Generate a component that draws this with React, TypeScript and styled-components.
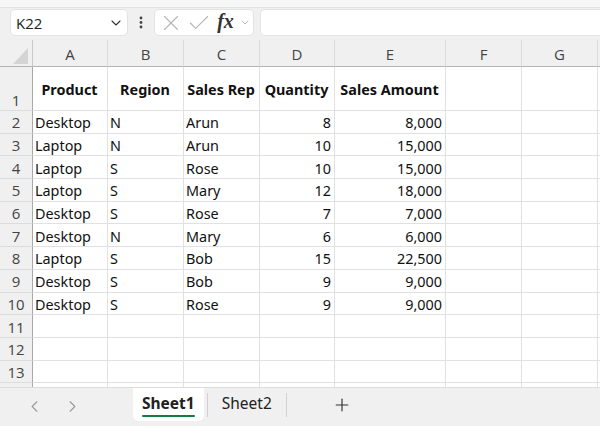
import React from "react";
import styled, { createGlobalStyle } from "styled-components";
import { ChevronDown, ChevronLeft, ChevronRight, Plus, X, Check } from "lucide-react";

const GlobalStyle = createGlobalStyle`
  html, body { margin: 0; padding: 0; background: #f0f0f0; }
  body { font-family: "Open Sans", "Noto Sans", sans-serif; }
  * { box-sizing: border-box; }
`;

const Frame = styled.div`
  width: 600px;
  height: 426px;
  display: flex;
  flex-direction: column;
  background: #f0f0f0;
  overflow: hidden;
`;

const TopStrip = styled.div`
  height: 8px;
  background: #f7f7f7;
  border-bottom: 1px solid #e2e2e2;
  box-shadow: 0 1px 2px rgba(0, 0, 0, 0.06);
`;

const FormulaBar = styled.div`
  height: 32px;
  display: flex;
  align-items: flex-start;
  padding: 1px 0 0 10px;
  background: #f0f0f0;
`;

const Box = styled.div<{ $w?: number }>`
  height: 27px;
  background: #ffffff;
  border: 1px solid #e3e3e3;
  border-radius: 5px;
  display: flex;
  align-items: center;
  ${(p) => (p.$w ? `width: ${p.$w}px;` : "flex: 1; border-right: none; border-radius: 5px 0 0 5px;")}
`;

const NameText = styled.span`
  flex: 1;
  padding-left: 5px;
  font-size: 15px;
  color: #222;
`;

const Dots = styled.div`
  width: 26px;
  display: flex;
  justify-content: center;
  padding-top: 7px;
`;

const IconSlot = styled.span<{ $w: number }>`
  width: ${(p) => p.$w}px;
  display: flex;
  justify-content: center;
  align-items: center;
`;

const Fx = styled.span`
  font-family: "Liberation Serif", "DejaVu Serif", serif;
  font-style: italic;
  font-weight: 700;
  font-size: 20px;
  color: #333;
  line-height: 1;
  margin-top: -3px;
`;

const Gap = styled.div<{ $w: number }>`
  width: ${(p) => p.$w}px;
`;

const Sheet = styled.div`
  height: 348px;
  overflow: hidden;
  display: grid;
  grid-template-columns: 33px 75px 76px 76px 75px 111px 76px 76px 1fr;
  grid-template-rows: 27px 44px repeat(13, 22.7px);
  background: #ffffff;
  border-bottom: 1px solid #dcdcdc;
`;

const Corner = styled.div`
  background: #f0f0f0;
  border-right: 1px solid #c8c8c8;
  border-bottom: 1px solid #b4b4b4;
  display: flex;
  align-items: flex-end;
  justify-content: flex-end;
  padding: 0 4px 2px 0;
`;

const ColHead = styled.div`
  background: #f0f0f0;
  border-right: 1px solid #dadada;
  border-bottom: 1px solid #b4b4b4;
  display: flex;
  align-items: center;
  justify-content: center;
  padding-top: 2px;
  font-size: 15px;
  color: #444;
`;

const RowHead = styled.div<{ $bottom?: boolean }>`
  background: #f0f0f0;
  border-right: 1px solid #a9a9a9;
  border-bottom: 1px solid #dcdcdc;
  display: flex;
  justify-content: center;
  align-items: ${(p) => (p.$bottom ? "flex-end" : "center")};
  padding-top: 1px;
  font-size: 15px;
  color: #444;
  line-height: 20px;
`;

const Cell = styled.div<{ $align?: "left" | "right" | "center"; $bold?: boolean }>`
  border-right: 1px solid #e1e1e1;
  border-bottom: 1px solid #e1e1e1;
  display: flex;
  align-items: center;
  justify-content: ${(p) =>
    p.$align === "right" ? "flex-end" : p.$align === "center" ? "center" : "flex-start"};
  padding: 2px 3px 0 2px;
  font-family: "Noto Sans", "Open Sans", sans-serif;
  font-size: 14.4px;
  font-weight: ${(p) => (p.$bold ? 700 : 400)};
  color: #111;
  white-space: nowrap;
  overflow: hidden;
`;

const TabBar = styled.div`
  flex: 1;
  display: flex;
  align-items: flex-start;
  background: #f0f0f0;
`;

const Nav = styled.div`
  width: 133px;
  display: flex;
  align-items: center;
  padding: 9px 0 0 25px;
  gap: 19px;
  color: #9a9a9a;
`;

const Tab = styled.div<{ $active?: boolean }>`
  height: ${(p) => (p.$active ? "33px" : "30px")};
  padding: 0 ${(p) => (p.$active ? "9px" : "14px")};
  display: flex;
  flex-direction: column;
  align-items: center;
  justify-content: center;
  background: ${(p) => (p.$active ? "#ffffff" : "transparent")};
  border-radius: 0 0 6px 6px;
  font-family: "Noto Sans", "Open Sans", sans-serif;
  font-size: 15.5px;
  font-weight: ${(p) => (p.$active ? 700 : 400)};
  color: #222;
`;

const Underline = styled.span`
  display: block;
  width: 100%;
  height: 2px;
  background: #107c41;
  border-radius: 1px;
  margin-top: 1px;
`;

const Divider = styled.div`
  width: 1px;
  height: 24px;
  margin: 5px 0 0;
  background: #d0d0d0;
`;

const AddBtn = styled.div`
  margin: 7px 0 0 45px;
  color: #333;
  display: flex;
`;

type Row = [string, string, string, number, string];
const rows: Row[] = [
  ["Desktop", "N", "Arun", 8, "8,000"],
  ["Laptop", "N", "Arun", 10, "15,000"],
  ["Laptop", "S", "Rose", 10, "15,000"],
  ["Laptop", "S", "Mary", 12, "18,000"],
  ["Desktop", "S", "Rose", 7, "7,000"],
  ["Desktop", "N", "Mary", 6, "6,000"],
  ["Laptop", "S", "Bob", 15, "22,500"],
  ["Desktop", "S", "Bob", 9, "9,000"],
  ["Desktop", "S", "Rose", 9, "9,000"],
];

const cols = ["A", "B", "C", "D", "E", "F", "G", ""];
const headers = ["Product", "Region", "Sales Rep", "Quantity", "Sales Amount"];

export default function App() {
  return (
    <Frame>
      <GlobalStyle />
      <TopStrip />
      <FormulaBar>
        <Box $w={118}>
          <NameText>K22</NameText>
          <IconSlot $w={22}>
            <ChevronDown size={16} strokeWidth={1.6} color="#333" />
          </IconSlot>
        </Box>
        <Dots>
          <svg width="4" height="13" viewBox="0 0 4 13">
            <circle cx="2" cy="2" r="1.4" fill="#444" />
            <circle cx="2" cy="6.5" r="1.4" fill="#444" />
            <circle cx="2" cy="11" r="1.4" fill="#444" />
          </svg>
        </Dots>
        <Box $w={100}>
          <IconSlot $w={31}>
            <X size={26} strokeWidth={1.0} color="#b5b5b5" />
          </IconSlot>
          <IconSlot $w={26}>
            <Check size={26} strokeWidth={1.0} color="#b5b5b5" />
          </IconSlot>
          <IconSlot $w={27}>
            <Fx>fx</Fx>
          </IconSlot>
          <IconSlot $w={12}>
            <ChevronDown size={13} strokeWidth={1.4} color="#9a9a9a" />
          </IconSlot>
        </Box>
        <Gap $w={6} />
        <Box />
      </FormulaBar>
      <Sheet>
        <Corner>
          <svg width="15" height="16" viewBox="0 0 15 16">
            <polygon points="15,0 15,16 0,16" fill="#d4d4d4" />
          </svg>
        </Corner>
        {cols.map((c, i) => (
          <ColHead key={"h" + i}>{c}</ColHead>
        ))}
        <RowHead $bottom>1</RowHead>
        {headers.map((h) => (
          <Cell key={h} $bold $align="center">
            {h}
          </Cell>
        ))}
        <Cell />
        <Cell />
        <Cell />
        {Array.from({ length: 13 }).map((_, r) => {
          const d = rows[r];
          return (
            <React.Fragment key={r}>
              <RowHead>{r + 2}</RowHead>
              <Cell>{d ? d[0] : ""}</Cell>
              <Cell>{d ? d[1] : ""}</Cell>
              <Cell>{d ? d[2] : ""}</Cell>
              <Cell $align="right">{d ? d[3] : ""}</Cell>
              <Cell $align="right">{d ? d[4] : ""}</Cell>
              <Cell />
              <Cell />
              <Cell />
            </React.Fragment>
          );
        })}
      </Sheet>
      <TabBar>
        <Nav>
          <ChevronLeft size={19} strokeWidth={1.4} />
          <ChevronRight size={19} strokeWidth={1.4} />
        </Nav>
        <Tab $active>
          <span>Sheet1</span>
          <Underline />
        </Tab>
        <Gap $w={3} />
        <Divider />
        <Tab>Sheet2</Tab>
        <Divider />
        <AddBtn>
          <Plus size={20} strokeWidth={1.4} />
        </AddBtn>
      </TabBar>
    </Frame>
  );
}
